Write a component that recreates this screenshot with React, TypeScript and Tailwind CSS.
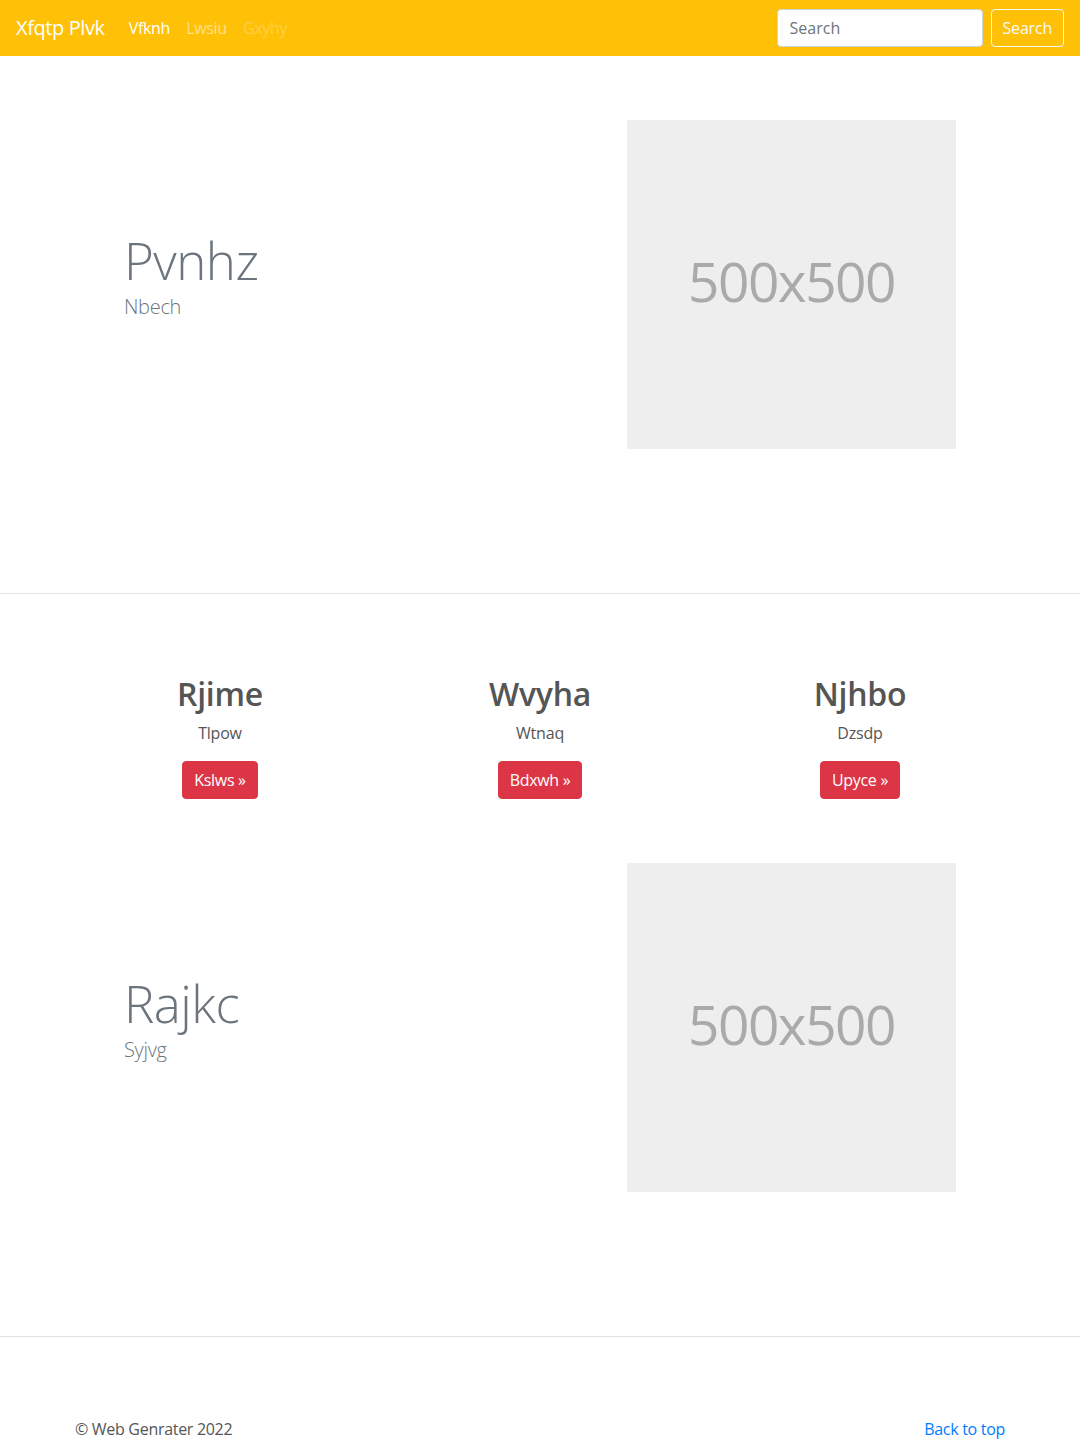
import React from "react";

interface IFeature {
  title: string;
  lead: string;
}

interface ICol {
  title: string;
  text: string;
  cta: string;
}

const cols: ICol[] = [
  { title: "Rjime", text: "Tlpow", cta: "Kslws" },
  { title: "Wvyha", text: "Wtnaq", cta: "Bdxwh" },
  { title: "Njhbo", text: "Dzsdp", cta: "Upyce" },
];

const Feature = ({ title, lead }: IFeature) => {
  return (
    <div className="mx-auto flex w-[960px] pt-16 pb-36">
      {/* Text */}
      <div className="flex-1 pl-16 pt-[110px]">
        <h1 className="text-[51px] leading-[60px] font-light tracking-[-0.5px] text-[#6c757d]">
          {title}
        </h1>
        <p className="mt-[2px] text-[20px] leading-[30px] font-light tracking-[-0.3px] text-[#6c757d]">
          {lead}
        </p>
      </div>

      {/* Placeholder image */}
      <div className="mr-16 flex h-[329px] w-[329px] items-center justify-center bg-[#eee]">
        <span className="mb-[8px] text-[55px] leading-none tracking-[-1.5px] text-[#aaa]">
          500x500
        </span>
      </div>
    </div>
  );
};

const App = () => {
  return (
    <div className="min-h-screen bg-white font-['Open_Sans','Noto_Sans',sans-serif] text-base text-[#555]">
      {/* Navbar */}
      <nav className="flex h-14 items-center bg-[#ffc107] px-4">
        <a
          href="#"
          className="mr-4 text-[20px] leading-[30px] tracking-[-0.4px] text-white"
        >
          Xfqtp Plvk
        </a>
        <ul className="flex tracking-[-0.3px]">
          <li>
            <a href="#" className="px-2 leading-6 text-white">
              Vfknh
            </a>
          </li>
          <li>
            <a href="#" className="px-2 leading-6 text-white/50">
              Lwsiu
            </a>
          </li>
          <li>
            <a href="#" className="px-2 leading-6 text-white/25">
              Gxyhy
            </a>
          </li>
        </ul>
        <form className="ml-auto flex items-center">
          <input
            type="text"
            placeholder="Search"
            className="mr-2 h-[38px] w-[206px] rounded border border-[#ced4da] bg-white px-3 text-base text-[#495057] placeholder:text-[#6c757d] outline-none"
          />
          <button
            type="button"
            className="h-[38px] rounded border border-[#f8f9fa] px-[11px] leading-6 tracking-[-0.2px] text-[#f8f9fa]"
          >
            Search
          </button>
        </form>
      </nav>

      {/* First feature */}
      <section className="border-b border-[#dee2e6]">
        <Feature title="Pvnhz" lead="Nbech" />
      </section>

      {/* Columns + second feature */}
      <section className="border-b border-[#dee2e6]">
        <div className="mx-auto grid w-[960px] grid-cols-3 pt-[81px]">
          {cols.map((c) => (
            <div key={c.title} className="flex flex-col items-center">
              <h2 className="mb-2 text-[32px] leading-[38px] font-semibold tracking-[-0.3px] text-[#555]">
                {c.title}
              </h2>
              <p className="mb-4 leading-6 tracking-[-0.2px] text-[#555]">
                {c.text}
              </p>
              <a
                href="#"
                className="rounded border border-[#dc3545] bg-[#dc3545] px-[11px] py-1.5 leading-6 tracking-[-0.3px] text-white"
              >
                {c.cta} »
              </a>
            </div>
          ))}
        </div>
        <Feature title="Rajkc" lead="Syjvg" />
      </section>

      {/* Footer */}
      <footer className="mx-auto flex w-[960px] justify-between px-[15px] pt-20 pb-12 tracking-[-0.3px]">
        <p className="leading-6 text-[#555]">© Web Genrater 2022</p>
        <a href="#" className="leading-6 text-[#007bff]">
          Back to top
        </a>
      </footer>
    </div>
  );
};

export default App;
